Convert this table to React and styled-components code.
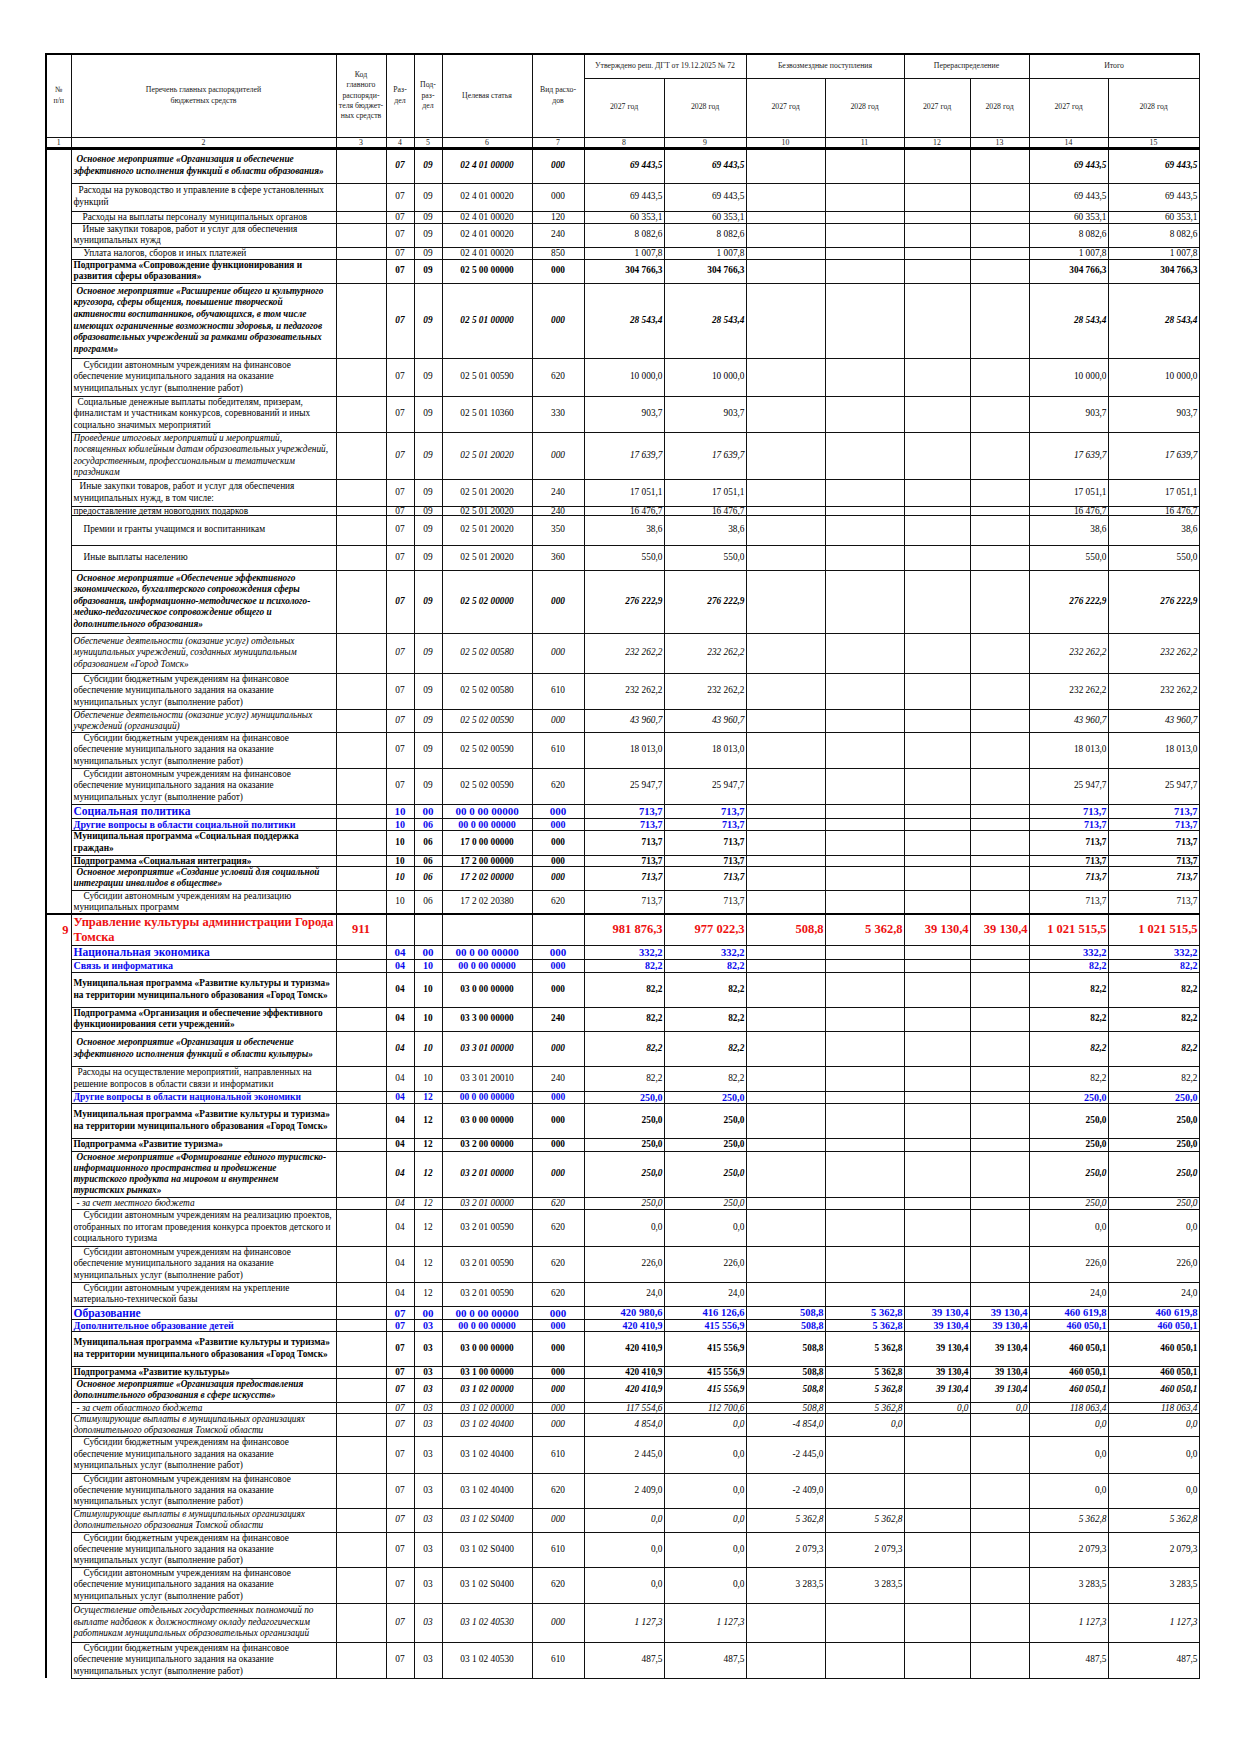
import React from "react";
import styled, { createGlobalStyle, css } from "styled-components";

const BLUE = "#0a0aee";
const RED = "#ee1111";

const GlobalStyle = createGlobalStyle`
  html, body { margin: 0; padding: 0; background: #fff; }
  body { font-family: "Liberation Serif", "Times New Roman", serif; }
`;

const Page = styled.main`
  padding: 53px 0 40px 45px;
`;

const Sheet = styled.table`
  table-layout: fixed;
  border-collapse: collapse;
  width: 1153px;
  font-family: "Liberation Serif", "Times New Roman", serif;
  color: #000;
`;

const HeadRow = styled.tr`
  height: ${(p) => p.$h}px;
  ${(p) => p.$first && css`border-top: 2px solid #000;`}
`;

const HeadCell = styled.th`
  border: 1px solid #111;
  font-weight: 400;
  font-size: 7.8px;
  line-height: 10.3px;
  color: #222;
  text-align: center;
  vertical-align: middle;
  white-space: nowrap;
  padding: 0;
  ${(p) => p.$edge && css`border-left: 2px solid #000;`}
`;

const NumberRow = styled.tr`
  height: 11px;
  border-bottom: 3px solid #000;
`;

const NumberCell = styled.td`
  border: 1px solid #111;
  font-size: 7.8px;
  line-height: 9px;
  color: #222;
  text-align: center;
  padding: 0;
  ${(p) => p.$edge && css`border-left: 2px solid #000;`}
`;

const KINDS = {
  reg: { w: 400, s: "normal", c: "#000", n: 9.3, k: 9.3, v: 9.3, lh: 11.6 },
  it: { w: 400, s: "italic", c: "#000", n: 9.3, k: 9.3, v: 9.3, lh: 11.6 },
  b: { w: 700, s: "normal", c: "#000", n: 9.3, k: 9.3, v: 9.3, lh: 11.6 },
  bi: { w: 700, s: "italic", c: "#000", n: 9.3, k: 9.3, v: 9.3, lh: 11.6 },
  bl: { w: 700, s: "normal", c: BLUE, n: 11.5, k: 11, v: 10.5, lh: 13 },
  bm: { w: 700, s: "normal", c: BLUE, n: 10, k: 10, v: 10, lh: 12 },
  bs: { w: 700, s: "normal", c: BLUE, n: 9.5, k: 9.5, v: 10, lh: 11 },
  red: { w: 700, s: "normal", c: RED, n: 12.5, k: 12.5, v: 12.5, lh: 15 },
};

const kindFont = (field) => css`
  font-weight: ${(p) => KINDS[p.$k].w};
  font-style: ${(p) => KINDS[p.$k].s};
  color: ${(p) => KINDS[p.$k].c};
  font-size: ${(p) => KINDS[p.$k][field]}px;
  line-height: ${(p) => p.$lh}px;
`;

const DataRow = styled.tr`
  height: ${(p) => p.$h}px;
  ${(p) => p.$top && css`border-top: 2px solid #000;`}
`;

const IndexCell = styled.td`
  border: 1px solid #111;
  border-left: 2px solid #000;
  border-bottom: none;
  vertical-align: top;
  text-align: right;
  padding: 8px 2px 0 0;
  font-size: 12.5px;
  font-weight: 700;
  color: ${RED};
  line-height: 14px;
`;

const NameCell = styled.td`
  border: 1px solid #111;
  vertical-align: middle;
  text-align: left;
  white-space: nowrap;
  padding: 0 1px 0 2px;
  overflow: visible;
  ${kindFont("n")}
`;

const Line = styled.span`
  display: block;
  &:first-child { text-indent: ${(p) => p.$i}px; }
`;

const CodeCell = styled.td`
  border: 1px solid #111;
  vertical-align: middle;
  text-align: center;
  white-space: nowrap;
  padding: 0;
  ${kindFont("k")}
`;

const ValueCell = styled.td`
  border: 1px solid #111;
  vertical-align: middle;
  text-align: right;
  white-space: nowrap;
  padding: 0 1px 0 0;
  ${kindFont("v")}
`;

const WIDTHS = [25, 265, 50, 28, 28, 90, 52, 80, 82, 79, 79, 66, 59, 79, 91];

const same = (v) => [v, v, "", "", "", "", v, v];

const SUBS_A = [
  "Субсидии автономным учреждениям на финансовое",
  "обеспечение муниципального задания на оказание",
  "муниципальных услуг (выполнение работ)",
];
const SUBS_B = [
  "Субсидии бюджетным учреждениям на финансовое",
  "обеспечение муниципального задания на оказание",
  "муниципальных услуг (выполнение работ)",
];
const MP_CULT = [
  "Муниципальная программа «Развитие культуры и туризма»",
  "на территории муниципального образования «Город Томск»",
];
const STIM = [
  "Стимулирующие выплаты в муниципальных организациях",
  "дополнительного образования Томской области",
];
const EDU = ["420 410,9", "415 556,9", "508,8", "5 362,8", "39 130,4", "39 130,4", "460 050,1", "460 050,1"];

const ROWS = [
  { h: 35, k: "bi", i: 3, t: ["Основное мероприятие «Организация и обеспечение", "эффективного исполнения функций в области образования»"], c: ["07", "09", "02 4 01 00000", "000"], v: same("69 443,5") },
  { h: 28, k: "reg", i: 5, t: ["Расходы на руководство и управление в сфере установленных", "функций"], c: ["07", "09", "02 4 01 00020", "000"], v: same("69 443,5") },
  { h: 12, k: "reg", i: 9, t: ["Расходы на выплаты персоналу муниципальных органов"], c: ["07", "09", "02 4 01 00020", "120"], v: same("60 353,1") },
  { h: 24, k: "reg", i: 9, t: ["Иные закупки товаров, работ и услуг для обеспечения", "муниципальных нужд"], c: ["07", "09", "02 4 01 00020", "240"], v: same("8 082,6") },
  { h: 12, k: "reg", i: 10, t: ["Уплата налогов, сборов и иных платежей"], c: ["07", "09", "02 4 01 00020", "850"], v: same("1 007,8") },
  { h: 24, k: "b", i: 0, t: ["Подпрограмма «Сопровождение функционирования и", "развития сферы образования»"], c: ["07", "09", "02 5 00 00000", "000"], v: same("304 766,3") },
  { h: 75, k: "bi", i: 3, t: ["Основное мероприятие «Расширение общего и культурного", "кругозора, сферы общения, повышение творческой", "активности воспитанников, обучающихся, в том числе", "имеющих ограниченные возможности здоровья, и педагогов", "образовательных учреждений за рамками образовательных", "программ»"], c: ["07", "09", "02 5 01 00000", "000"], v: same("28 543,4") },
  { h: 38, k: "reg", i: 10, t: SUBS_A, c: ["07", "09", "02 5 01 00590", "620"], v: same("10 000,0") },
  { h: 36, k: "reg", i: 4, t: ["Социальные денежные выплаты победителям, призерам,", "финалистам и участникам конкурсов, соревнований и иных", "социально значимых мероприятий"], c: ["07", "09", "02 5 01 10360", "330"], v: same("903,7") },
  { h: 47, k: "it", i: 0, t: ["Проведение итоговых мероприятий и мероприятий,", "посвященных юбилейным датам образовательных учреждений,", "государственным, профессиональным и тематическим", "праздникам"], c: ["07", "09", "02 5 01 20020", "000"], v: same("17 639,7") },
  { h: 27, k: "reg", i: 6, t: ["Иные закупки товаров, работ и услуг для обеспечения", "муниципальных нужд, в том числе:"], c: ["07", "09", "02 5 01 20020", "240"], v: same("17 051,1") },
  { h: 9, k: "reg", i: 0, t: ["предоставление детям новогодних подарков"], c: ["07", "09", "02 5 01 20020", "240"], v: same("16 476,7") },
  { h: 30, k: "reg", i: 10, t: ["Премии и гранты учащимся и воспитанникам"], c: ["07", "09", "02 5 01 20020", "350"], v: same("38,6") },
  { h: 25, k: "reg", i: 10, t: ["Иные выплаты населению"], c: ["07", "09", "02 5 01 20020", "360"], v: same("550,0") },
  { h: 63, k: "bi", i: 3, t: ["Основное мероприятие «Обеспечение эффективного", "экономического, бухгалтерского сопровождения сферы", "образования, информационно-методическое и психолого-", "медико-педагогическое сопровождение общего и", "дополнительного образования»"], c: ["07", "09", "02 5 02 00000", "000"], v: same("276 222,9") },
  { h: 40, k: "it", i: 0, t: ["Обеспечение деятельности (оказание услуг) отдельных", "муниципальных учреждений, созданных муниципальным", "образованием «Город Томск»"], c: ["07", "09", "02 5 02 00580", "000"], v: same("232 262,2") },
  { h: 36, k: "reg", i: 10, t: SUBS_B, c: ["07", "09", "02 5 02 00580", "610"], v: same("232 262,2") },
  { h: 23, k: "it", i: 0, t: ["Обеспечение деятельности (оказание услуг) муниципальных", "учреждений (организаций)"], c: ["07", "09", "02 5 02 00590", "000"], v: same("43 960,7") },
  { h: 36, k: "reg", i: 10, t: SUBS_B, c: ["07", "09", "02 5 02 00590", "610"], v: same("18 013,0") },
  { h: 36, k: "reg", i: 10, t: SUBS_A, c: ["07", "09", "02 5 02 00590", "620"], v: same("25 947,7") },
  { h: 14, k: "bl", i: 0, t: ["Социальная политика"], c: ["10", "00", "00 0 00 00000", "000"], v: same("713,7") },
  { h: 12, k: "bm", i: 0, t: ["Другие вопросы в области социальной политики"], c: ["10", "06", "00 0 00 00000", "000"], v: same("713,7") },
  { h: 25, k: "b", i: 0, t: ["Муниципальная программа «Социальная поддержка", "граждан»"], c: ["10", "06", "17 0 00 00000", "000"], v: same("713,7") },
  { h: 11, k: "b", i: 0, t: ["Подпрограмма «Социальная интеграция»"], c: ["10", "06", "17 2 00 00000", "000"], v: same("713,7") },
  { h: 24, k: "bi", i: 3, t: ["Основное мероприятие «Создание условий для социальной", "интеграции инвалидов в обществе»"], c: ["10", "06", "17 2 02 00000", "000"], v: same("713,7") },
  { h: 23, k: "reg", i: 10, t: ["Субсидии автономным учреждениям на реализацию", "муниципальных программ"], c: ["10", "06", "17 2 02 20380", "620"], v: same("713,7") },
  { h: 31, k: "red", i: 0, top: true, kod: "911", t: ["Управление культуры администрации Города", "Томска"], c: ["", "", "", ""], v: ["981 876,3", "977 022,3", "508,8", "5 362,8", "39 130,4", "39 130,4", "1 021 515,5", "1 021 515,5"] },
  { h: 14, k: "bl", i: 0, t: ["Национальная экономика"], c: ["04", "00", "00 0 00 00000", "000"], v: same("332,2") },
  { h: 13, k: "bm", i: 0, t: ["Связь и информатика"], c: ["04", "10", "00 0 00 00000", "000"], v: same("82,2") },
  { h: 35, k: "b", i: 0, t: MP_CULT, c: ["04", "10", "03 0 00 00000", "000"], v: same("82,2") },
  { h: 24, k: "b", i: 0, t: ["Подпрограмма «Организация и обеспечение эффективного", "функционирования сети учреждений»"], c: ["04", "10", "03 3 00 00000", "240"], v: same("82,2") },
  { h: 35, k: "bi", i: 3, t: ["Основное мероприятие «Организация и обеспечение", "эффективного исполнения функций в области культуры»"], c: ["04", "10", "03 3 01 00000", "000"], v: same("82,2") },
  { h: 25, k: "reg", i: 4, t: ["Расходы на осуществление мероприятий, направленных на", "решение вопросов в области связи и информатики"], c: ["04", "10", "03 3 01 20010", "240"], v: same("82,2") },
  { h: 12, k: "bs", i: 0, t: ["Другие вопросы в области национальной экономики"], c: ["04", "12", "00 0 00 00000", "000"], v: same("250,0") },
  { h: 35, k: "b", i: 0, t: MP_CULT, c: ["04", "12", "03 0 00 00000", "000"], v: same("250,0") },
  { h: 13, k: "b", i: 0, t: ["Подпрограмма «Развитие туризма»"], c: ["04", "12", "03 2 00 00000", "000"], v: same("250,0") },
  { h: 46, k: "bi", i: 3, t: ["Основное мероприятие «Формирование единого туристско-", "информационного пространства и продвижение", "туристского продукта на мировом и внутреннем", "туристских рынках»"], c: ["04", "12", "03 2 01 00000", "000"], v: same("250,0") },
  { h: 12, k: "it", i: 3, t: ["- за счет местного бюджета"], c: ["04", "12", "03 2 01 00000", "620"], v: same("250,0") },
  { h: 37, k: "reg", i: 10, t: ["Субсидии автономным учреждениям на реализацию проектов,", "отобранных по итогам проведения конкурса проектов детского и", "социального туризма"], c: ["04", "12", "03 2 01 00590", "620"], v: same("0,0") },
  { h: 36, k: "reg", i: 10, t: SUBS_A, c: ["04", "12", "03 2 01 00590", "620"], v: same("226,0") },
  { h: 24, k: "reg", i: 10, t: ["Субсидии автономным учреждениям на укрепление", "материально-технической базы"], c: ["04", "12", "03 2 01 00590", "620"], v: same("24,0") },
  { h: 13, k: "bl", i: 0, t: ["Образование"], c: ["07", "00", "00 0 00 00000", "000"], v: ["420 980,6", "416 126,6", "508,8", "5 362,8", "39 130,4", "39 130,4", "460 619,8", "460 619,8"] },
  { h: 12, k: "bm", i: 0, t: ["Дополнительное образование детей"], c: ["07", "03", "00 0 00 00000", "000"], v: EDU },
  { h: 35, k: "b", i: 0, t: MP_CULT, c: ["07", "03", "03 0 00 00000", "000"], v: EDU },
  { h: 12, k: "b", i: 0, t: ["Подпрограмма «Развитие культуры»"], c: ["07", "03", "03 1 00 00000", "000"], v: EDU },
  { h: 24, k: "bi", i: 3, t: ["Основное мероприятие «Организация предоставления", "дополнительного образования в сфере искусств»"], c: ["07", "03", "03 1 02 00000", "000"], v: EDU },
  { h: 11, k: "it", i: 3, t: ["- за счет областного бюджета"], c: ["07", "03", "03 1 02 00000", "000"], v: ["117 554,6", "112 700,6", "508,8", "5 362,8", "0,0", "0,0", "118 063,4", "118 063,4"] },
  { h: 23, k: "it", i: 0, t: STIM, c: ["07", "03", "03 1 02 40400", "000"], v: ["4 854,0", "0,0", "-4 854,0", "0,0", "", "", "0,0", "0,0"] },
  { h: 37, k: "reg", i: 10, t: SUBS_B, c: ["07", "03", "03 1 02 40400", "610"], v: ["2 445,0", "0,0", "-2 445,0", "", "", "", "0,0", "0,0"] },
  { h: 35, k: "reg", i: 10, t: SUBS_A, c: ["07", "03", "03 1 02 40400", "620"], v: ["2 409,0", "0,0", "-2 409,0", "", "", "", "0,0", "0,0"] },
  { h: 24, k: "it", i: 0, t: STIM, c: ["07", "03", "03 1 02 S0400", "000"], v: ["0,0", "0,0", "5 362,8", "5 362,8", "", "", "5 362,8", "5 362,8"] },
  { h: 35, k: "reg", i: 10, t: SUBS_B, c: ["07", "03", "03 1 02 S0400", "610"], v: ["0,0", "0,0", "2 079,3", "2 079,3", "", "", "2 079,3", "2 079,3"] },
  { h: 36, k: "reg", i: 10, t: SUBS_A, c: ["07", "03", "03 1 02 S0400", "620"], v: ["0,0", "0,0", "3 283,5", "3 283,5", "", "", "3 283,5", "3 283,5"] },
  { h: 39, k: "it", i: 0, t: ["Осуществление отдельных государственных полномочий по", "выплате надбавок к должностному окладу педагогическим", "работникам муниципальных образовательных организаций"], c: ["07", "03", "03 1 02 40530", "000"], v: same("1 127,3") },
  { h: 36, k: "reg", i: 10, t: SUBS_B, c: ["07", "03", "03 1 02 40530", "610"], v: same("487,5") },
];

const lineHeight = (row) =>
  Math.min(KINDS[row.k].lh, Math.floor(((row.h - 1) / row.t.length) * 10) / 10);

function Row({ row, index }) {
  const lh = lineHeight(row);
  return (
    <DataRow $h={row.h} $top={row.top}>
      {index === 0 && <IndexCell rowSpan={26} />}
      {index === 26 && <IndexCell rowSpan={ROWS.length - 26}>9</IndexCell>}
      <NameCell $k={row.k} $lh={lh}>
        {row.t.map((line, j) => (
          <Line key={j} $i={row.i}>{line}</Line>
        ))}
      </NameCell>
      <CodeCell $k={row.kod ? "red" : row.k} $lh={lh}>{row.kod || ""}</CodeCell>
      {row.c.map((code, j) => (
        <CodeCell key={j} $k={row.k} $lh={lh}>{code}</CodeCell>
      ))}
      {row.v.map((val, j) => (
        <ValueCell key={j} $k={row.k} $lh={lh}>{val}</ValueCell>
      ))}
    </DataRow>
  );
}

export default function App() {
  return (
    <Page>
      <GlobalStyle />
      <Sheet>
        <colgroup>
          {WIDTHS.map((w, i) => (
            <col key={i} style={{ width: w }} />
          ))}
        </colgroup>
        <thead>
          <HeadRow $h={24} $first>
            <HeadCell rowSpan={2} $edge>№<br />п/п</HeadCell>
            <HeadCell rowSpan={2}>Перечень главных распорядителей<br />бюджетных средств</HeadCell>
            <HeadCell rowSpan={2}>Код<br />главного<br />распоряди-<br />теля бюджет-<br />ных средств</HeadCell>
            <HeadCell rowSpan={2}>Раз-<br />дел</HeadCell>
            <HeadCell rowSpan={2}>Под-<br />раз-<br />дел</HeadCell>
            <HeadCell rowSpan={2}>Целевая статья</HeadCell>
            <HeadCell rowSpan={2}>Вид расхо-<br />дов</HeadCell>
            <HeadCell colSpan={2}>Утверждено реш. ДГТ от 19.12.2025 № 72</HeadCell>
            <HeadCell colSpan={2}>Безвозмездные поступления</HeadCell>
            <HeadCell colSpan={2}>Перераспределение</HeadCell>
            <HeadCell colSpan={2}>Итого</HeadCell>
          </HeadRow>
          <HeadRow $h={59}>
            {["2027 год", "2028 год", "2027 год", "2028 год", "2027 год", "2028 год", "2027 год", "2028 год"].map((y, i) => (
              <HeadCell key={i}>{y}</HeadCell>
            ))}
          </HeadRow>
          <NumberRow>
            {WIDTHS.map((_, i) => (
              <NumberCell key={i} $edge={i === 0}>{i + 1}</NumberCell>
            ))}
          </NumberRow>
        </thead>
        <tbody>
          {ROWS.map((row, i) => (
            <Row key={i} row={row} index={i} />
          ))}
        </tbody>
      </Sheet>
    </Page>
  );
}
